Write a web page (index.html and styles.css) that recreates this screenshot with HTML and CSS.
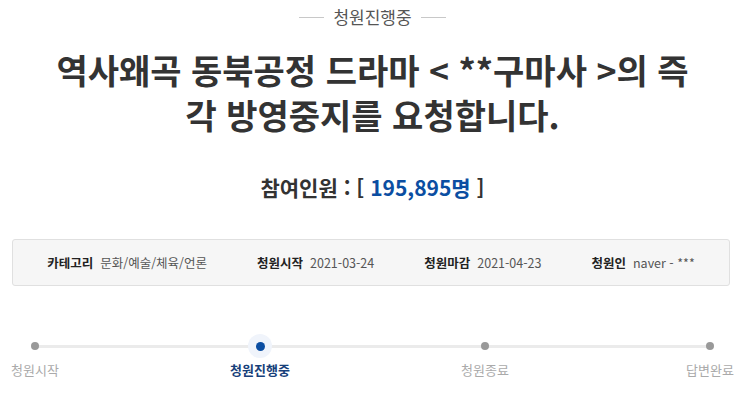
FILE: index.html
```
<!DOCTYPE html>
<html lang="ko">
<head>
<meta charset="utf-8">
<link rel="stylesheet" href="styles.css">
</head>
<body>
<div class="page">
  <div class="status"><span class="status-line"></span><span class="status-text">청원진행중</span><span class="status-line"></span></div>
  <h1 class="title">역사왜곡 동북공정 드라마 &lt; **구마사 &gt;의 즉<br>각 방영중지를 요청합니다.</h1>
  <div class="count">참여인원 : [ <span class="count-num">195,895명</span> ]</div>
  <div class="info">
    <div class="info-item"><span class="info-label">카테고리</span><span class="info-value">문화/예술/체육/언론</span></div>
    <div class="info-item"><span class="info-label">청원시작</span><span class="info-value">2021-03-24</span></div>
    <div class="info-item"><span class="info-label">청원마감</span><span class="info-value">2021-04-23</span></div>
    <div class="info-item"><span class="info-label">청원인</span><span class="info-value">naver - ***</span></div>
  </div>
  <div class="steps">
    <div class="step"><span class="dot"></span><span class="step-label">청원시작</span></div>
    <div class="step active"><span class="dot"></span><span class="step-label">청원진행중</span></div>
    <div class="step"><span class="dot"></span><span class="step-label">청원종료</span></div>
    <div class="step"><span class="dot"></span><span class="step-label">답변완료</span></div>
  </div>
</div>
</body>
</html>
```
FILE: styles.css
```
* { box-sizing: border-box; }
html, body { margin: 0; padding: 0; background: #fff; }
body {
  font-family: "Noto Sans CJK KR", "Noto Sans", sans-serif;
  color: #333;
  width: 745px;
  height: 409px;
  overflow: hidden;
}
.page { display: flex; flex-direction: column; align-items: stretch; }
.status {
  display: flex; align-items: center; justify-content: center;
  gap: 9px; margin-top: 5px; height: 24px;
}
.status-line { width: 25px; height: 1px; background: #c8c8c8; }
.status-text { font-size: 17px; line-height: 24px; color: #555; }
.title {
  margin: 18px 0 0; text-align: center;
  font-size: 34px; line-height: 45px; font-weight: 700; color: #333;
  letter-spacing: 0;
}
.count {
  margin-top: 35px; text-align: center;
  font-size: 21px; line-height: 30px; font-weight: 700; color: #333;
}
.count-num { color: #0b4ea2; }
.info {
  margin: 37px 15px 0 12px; height: 47px;
  background: #f6f6f6; border: 1px solid #e0e0e0; border-radius: 3px;
  display: flex; align-items: center; justify-content: center; gap: 50px;
  font-size: 12.5px;
}
.info-item { display: flex; gap: 7px; align-items: center; }
.info-label { font-weight: 700; color: #222; }
.info-value { color: #555; }
.steps {
  position: relative;
  margin-top: 48px; padding: 0 6px;
  display: flex; justify-content: space-between;
}
.steps::before {
  content: ""; position: absolute; left: 35px; right: 35px; top: 11px;
  height: 3px; background: #ebebeb;
}
.step {
  position: relative; width: 58px;
  display: flex; flex-direction: column; align-items: center;
}
.dot {
  width: 24px; height: 24px; border-radius: 50%;
  display: flex; align-items: center; justify-content: center;
}
.dot::after {
  content: ""; width: 8px; height: 8px; border-radius: 50%; background: #999;
}
.active .dot { background: #f0f4fb; }
.active .dot::after { background: #0b4ea2; width: 9px; height: 9px; }
.step-label {
  margin-top: 2px; white-space: nowrap;
  font-size: 13px; line-height: 20px; color: #aaa;
}
.active .step-label { color: #173f7a; font-weight: 700; }
```
